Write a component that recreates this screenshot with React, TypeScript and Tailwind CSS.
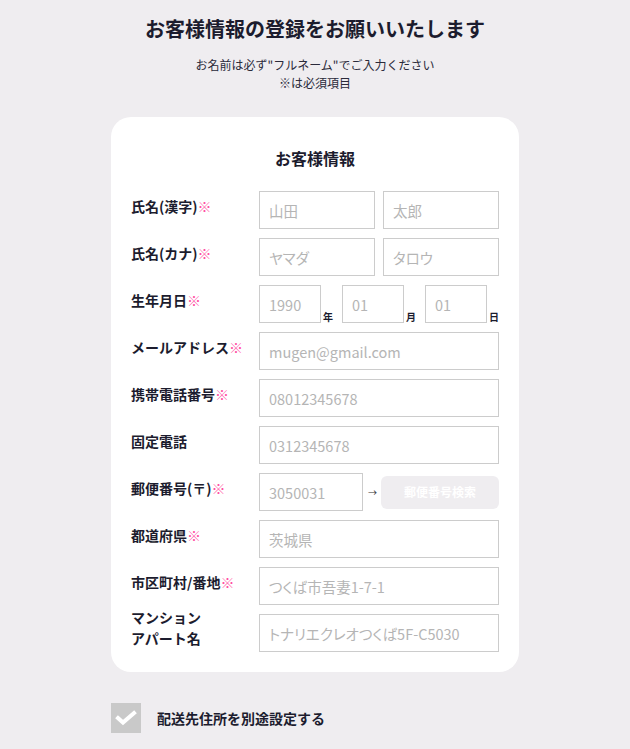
import { FC, ReactNode } from "react"

const font = { fontFamily: '"Noto Sans CJK JP", "Noto Sans", sans-serif' }

const Req = () => <span className="text-[#ff4fa3] font-normal">※</span>

const Field: FC<{ placeholder: string; className?: string }> = ({ placeholder, className }) => (
  <input
    placeholder={placeholder}
    className={
      "h-[38px] border border-[#cccccc] bg-white px-[9px] text-[14.5px] text-[#333] [font-feature-settings:'palt'] placeholder:text-[#b5b5b5] outline-none " +
      (className ?? "w-full")
    }
  />
)

const Row: FC<{ label: ReactNode; children: ReactNode; tall?: boolean }> = ({ label, children, tall }) => (
  <div className="flex items-center">
    <div
      className={
        tall
          ? "-my-[2px] w-[128px] shrink-0 -translate-y-[5px] text-[14px] font-bold leading-[21px] text-[#1c1c2e]"
          : "w-[128px] shrink-0 -translate-y-[4px] text-[14px] font-bold leading-[18px] text-[#1c1c2e]"
      }
    >
      {label}
    </div>
    <div className="flex-1">{children}</div>
  </div>
)

const DatePart: FC<{ placeholder: string; unit: string }> = ({ placeholder, unit }) => (
  <div className="flex items-end gap-[2px]">
    <Field placeholder={placeholder} className="w-[62px]" />
    <span className="w-[10px] text-[10px] font-bold leading-[12px] text-[#1c1c2e]">{unit}</span>
  </div>
)

export default function App() {
  return (
    <div style={font} className="min-h-[749px] bg-[#efedf0] pt-[15px] pb-[16px]">
      <h1 className="text-center text-[20px] font-bold leading-[28px] text-[#1c1c2e]">
        お客様情報の登録をお願いいたします
      </h1>
      <div className="mt-[13px] text-center text-[12px] leading-[18px] text-[#2a2a3a]">
        <p>お名前は必ず"フルネーム"でご入力ください</p>
        <p>※は必須項目</p>
      </div>

      <div className="mx-auto mt-[25px] w-[408px] rounded-[20px] bg-white px-[20px] pt-[29px] pb-[20px]">
        <h2 className="mb-[21px] text-center text-[16px] font-bold leading-[24px] text-[#1c1c2e]">
          お客様情報
        </h2>
        <div className="flex flex-col gap-[9px]">
          <Row label={<>氏名(漢字)<Req /></>}>
            <div className="flex gap-[8px]">
              <Field placeholder="山田" />
              <Field placeholder="太郎" />
            </div>
          </Row>
          <Row label={<>氏名(カナ)<Req /></>}>
            <div className="flex gap-[8px]">
              <Field placeholder="ヤマダ" />
              <Field placeholder="タロウ" />
            </div>
          </Row>
          <Row label={<>生年月日<Req /></>}>
            <div className="flex gap-[9px]">
              <DatePart placeholder="1990" unit="年" />
              <DatePart placeholder="01" unit="月" />
              <DatePart placeholder="01" unit="日" />
            </div>
          </Row>
          <Row label={<>メールアドレス<Req /></>}>
            <Field placeholder="mugen@gmail.com" />
          </Row>
          <Row label={<>携帯電話番号<Req /></>}>
            <Field placeholder="08012345678" />
          </Row>
          <Row label="固定電話">
            <Field placeholder="0312345678" />
          </Row>
          <Row label={<>郵便番号(〒)<Req /></>}>
            <div className="flex items-center">
              <Field placeholder="3050031" className="w-[104px]" />
              <span className="mx-[5px] w-[8px] text-[9px] leading-none text-[#333]">→</span>
              <button className="h-[33px] flex-1 rounded-[6px] bg-[#efedf0] text-[12px] font-bold text-white">
                郵便番号検索
              </button>
            </div>
          </Row>
          <Row label={<>都道府県<Req /></>}>
            <Field placeholder="茨城県" />
          </Row>
          <Row label={<>市区町村/番地<Req /></>}>
            <Field placeholder="つくば市吾妻1-7-1" />
          </Row>
          <Row
            tall
            label={
              <>
                <div>マンション</div>
                <div>アパート名</div>
              </>
            }
          >
            <Field placeholder="トナリエクレオつくば5F-C5030" />
          </Row>
        </div>
      </div>

      <label className="mx-auto mt-[31px] flex w-[408px] items-center gap-[16px]">
        <span className="flex h-[30px] w-[30px] items-center justify-center bg-[#c9c9c9]">
          <svg width="30" height="30" viewBox="0 0 30 30" fill="none">
            <path d="M7 15l5 4.5L23 10" stroke="white" strokeWidth="4" strokeLinecap="square" />
          </svg>
        </span>
        <span className="text-[14px] font-bold text-[#1c1c2e]">配送先住所を別途設定する</span>
      </label>
    </div>
  )
}
